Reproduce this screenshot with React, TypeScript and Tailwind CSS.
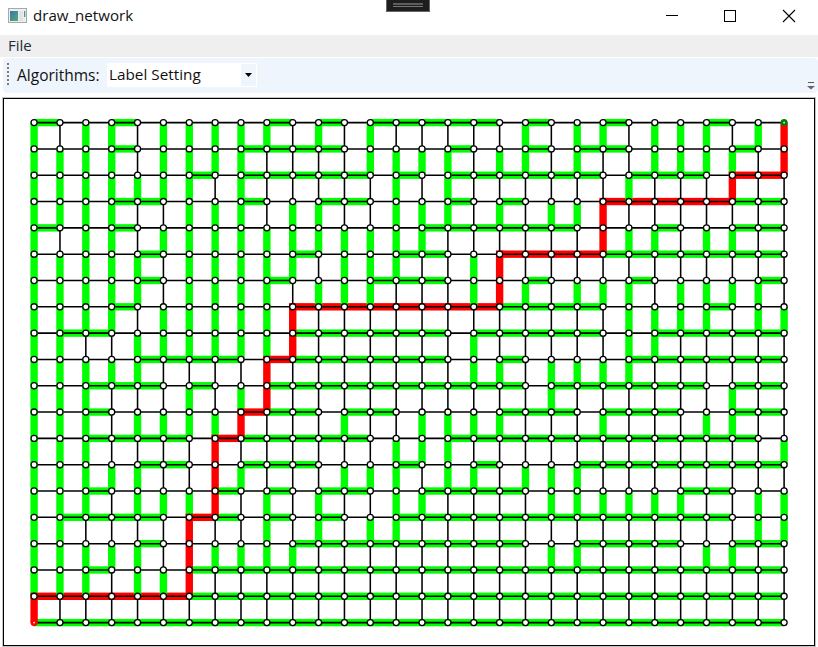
const COLS = 30;
const ROWS = 20;
const LEFT = 34.1;
const TOP = 122.6;
const DX = 750 / 29;
const DY = 500 / 19;

// Per row (top to bottom): columns whose predecessor is the node on the left.
// Every other node is reached from the node below it.
const FROM_LEFT = [
  "1,4,10,12,14-18,20,23,27",
  "4,9-12,17,20,22-23,28",
  "7,9-13,15,17-22,24-26,28-29",
  "4-5,9,12-13,17,19,23-29",
  "1,4,16-21,25,28-29",
  "5,11,15-16,19-29",
  "5,10,14-16,20,24,29",
  "4,11-22,27",
  "2-3,11-16,18-22,25-29",
  "5-8,10-16,19,24-29",
  "3-5,7,10-19,21-26,28-29",
  "3,9-11,13-14,19-21,23-25,28-29",
  "3-6,8-13,17-28",
  "5-6,9-11,15,18,22-29",
  "3,8,10,12-13,16-19,26-27",
  "2-5,7-8,10,12,15-27",
  "5,11-19,22-25,28-29",
  "3,7-29",
  "1-29",
  "1-29",
].map((row) => {
  const set = new Set<number>();
  row.split(",").forEach((part) => {
    const [a, b = a] = part.split("-").map(Number);
    for (let i = a; i <= b; i++) set.add(i);
  });
  return set;
});

// Walk back from the target (top right) to the source (bottom left).
const onPath = new Set<string>();
for (let c = COLS - 1, r = 0; c > 0 || r < ROWS - 1; ) {
  onPath.add(`${c},${r}`);
  if (FROM_LEFT[r].has(c)) c--;
  else r++;
}

const px = (c: number) => LEFT + c * DX;
const py = (r: number) => TOP + r * DY;

type Node = { c: number; r: number };
const nodes: Node[] = [];
for (let r = 0; r < ROWS; r++) for (let c = 0; c < COLS; c++) nodes.push({ c, r });

const hTree = nodes.filter((n) => FROM_LEFT[n.r].has(n.c));
const vTree = nodes.filter((n) => n.r < ROWS - 1 && !FROM_LEFT[n.r].has(n.c));
const vPlain = nodes.filter((n) => n.r < ROWS - 1 && FROM_LEFT[n.r].has(n.c));
const isPath = (n: Node) => onPath.has(`${n.c},${n.r}`);

function HEdges({ list, color }: { list: Node[]; color: string }) {
  return (
    <g stroke={color} strokeWidth={7.4}>
      {list.map((n) => (
        <line key={`${n.c},${n.r}`} x1={px(n.c - 1)} x2={px(n.c)} y1={py(n.r)} y2={py(n.r)} />
      ))}
    </g>
  );
}

function VEdges({ list, color }: { list: Node[]; color: string }) {
  const red = color === "#ff0000";
  return (
    <g stroke={color} strokeWidth={7.4}>
      {list.map((n) => {
        const up = red && n.c < COLS - 1 && !(n.r > 0 && isPath({ c: n.c, r: n.r - 1 }) && !FROM_LEFT[n.r - 1].has(n.c));
        return (
          <line key={`${n.c},${n.r}`} x1={px(n.c)} x2={px(n.c)} y1={py(n.r) - (up ? 3.7 : 0)} y2={py(n.r + 1)} />
        );
      })}
    </g>
  );
}

function Network() {
  return (
    <svg className="block h-[545px] w-[810px]" viewBox="4 99 810 545">
      <HEdges list={hTree.filter((n) => !isPath(n))} color="#00ff00" />
      <HEdges list={hTree.filter(isPath)} color="#ff0000" />
      <g stroke="#000" strokeWidth={1.55}>
        {Array.from({ length: ROWS }, (_, r) => (
          <line key={r} x1={px(0)} x2={px(COLS - 1)} y1={py(r)} y2={py(r)} />
        ))}
        {vPlain.map((n) => (
          <line key={`${n.c},${n.r}`} x1={px(n.c)} x2={px(n.c)} y1={py(n.r)} y2={py(n.r + 1)} />
        ))}
      </g>
      <VEdges list={vTree.filter((n) => !isPath(n))} color="#00ff00" />
      <VEdges list={vTree.filter(isPath)} color="#ff0000" />
      <g fill="#fff">
        {nodes.map((n) => {
          const source = n.c === 0 && n.r === ROWS - 1;
          const target = n.c === COLS - 1 && n.r === 0;
          const end = source || target;
          return (
            <circle
              key={`${n.c},${n.r}`}
              cx={px(n.c)}
              cy={py(n.r)}
              r={end ? 2.2 : 3.05}
              stroke={source ? "#ff0000" : target ? "#008000" : "#000"}
              strokeWidth={end ? 2.7 : 1.3}
            />
          );
        })}
      </g>
    </svg>
  );
}

function TitleBar() {
  return (
    <header className="relative flex h-[35px] items-start bg-white">
      <svg className="ml-2 mt-2 h-4 w-[19px]" viewBox="0 0 19 16">
        <defs>
          <linearGradient id="pane" x1="0" y1="0" x2="1" y2="1">
            <stop offset="0" stopColor="#3f74a8" />
            <stop offset="1" stopColor="#4fae74" />
          </linearGradient>
        </defs>
        <rect x="0.5" y="0.5" width="18" height="14" fill="#eceef0" stroke="#a3a9ae" />
        <rect x="2" y="3" width="8" height="10" fill="url(#pane)" />
        <rect x="11" y="3" width="4" height="10" fill="#e0e4e6" />
        <rect x="16" y="3" width="1.3" height="6" fill="#4f9a86" />
      </svg>
      <span className="ml-[6px] mt-1 text-[15.1px] leading-[22px]">draw_network</span>
      <div className="absolute left-[386px] top-0 flex h-3 w-11 flex-col gap-[1px] border-x border-b border-[#666] bg-[#1e1e1e] px-1.5 pt-[3px]">
        <div className="h-[2px] bg-[#5e5e5e]" />
        <div className="h-[1px] bg-[#777]" />
      </div>
      <svg className="ml-auto mr-[22px] mt-[9px] h-[14px] w-[130px]" viewBox="0 0 130 14" shapeRendering="crispEdges" fill="none" stroke="#000">
        <path d="M0 6.5h12M58.5 1.5h11v11h-11z" />
        <path d="M117 1l12 12M129 1l-12 12" shapeRendering="auto" strokeWidth="1.1" />
      </svg>
    </header>
  );
}

export default function App() {
  return (
    <div className="flex h-[647px] w-[818px] flex-col overflow-hidden bg-white font-['Open_Sans','Noto_Sans',sans-serif] text-[#111]">
      <TitleBar />
      <nav className="flex h-[22px] items-start bg-[#efefef] pl-2 text-[15px] leading-5 text-[#1e2a38]">File</nav>
      <div className="ml-[3px] mt-px flex h-[35px] items-center rounded-[4px] bg-[#eef5fd]">
        <div className="-mt-[3px] ml-1 flex flex-col gap-[2px]">
          {[0, 1, 2, 3, 4, 5].map((i) => (
            <i key={i} className="block size-[2px] bg-[#7c7c7c]" />
          ))}
        </div>
        <span className="-mt-[2px] ml-2 w-[90px] whitespace-nowrap text-[15.5px] leading-6">Algorithms:</span>
        <div className="-mt-[1px] flex h-6 w-[150px] items-center bg-white">
          <span className="-mt-[2px] ml-[2px] flex-1 whitespace-nowrap text-[15.3px] leading-6">Label Setting</span>
          <div className="mr-px flex h-[22px] w-[15px] items-center justify-center bg-[#eef5fd]">
            <svg className="h-1 w-[7px]" viewBox="0 0 7 4">
              <path d="M0 0h7L3.5 4z" />
            </svg>
          </div>
        </div>
        <svg className="ml-auto mr-[3px] mt-[20px] h-2 w-[8px]" viewBox="0 0 8 8">
          <path d="M1 .5h6" stroke="#555" />
          <path d="M0 4h8L4 7.5z" fill="#666" />
        </svg>
      </div>
      <main className="ml-[3px] mt-[5px] h-[548px] w-[812px] border border-black shadow-[0_0_0_1px_#c4c4c4]">
        <Network />
      </main>
    </div>
  );
}
